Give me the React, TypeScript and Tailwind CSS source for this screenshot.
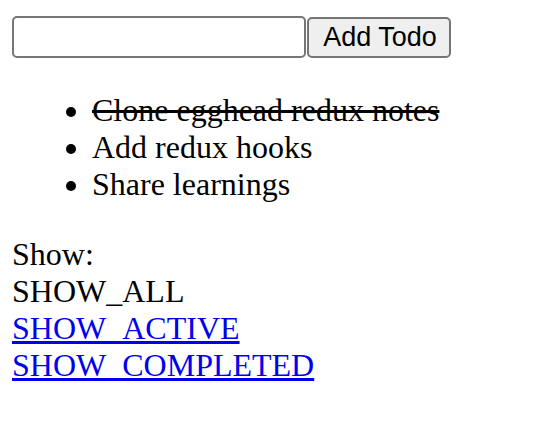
import { FormEvent, useState } from "react"

type Todo = { id: number; text: string; completed: boolean }
type Filter = "SHOW_ALL" | "SHOW_ACTIVE" | "SHOW_COMPLETED"

const filtros: Filter[] = ["SHOW_ALL", "SHOW_ACTIVE", "SHOW_COMPLETED"]

const App = () => {
  const [ texto, setTexto ] = useState<string>("")
  const [ filtro, setFiltro ] = useState<Filter>("SHOW_ALL")
  const [ todos, setTodos ] = useState<Todo[]>([
    { id: 0, text: "Clone egghead redux notes", completed: true },
    { id: 1, text: "Add redux hooks", completed: false },
    { id: 2, text: "Share learnings", completed: false },
  ])

  const adicionar = (e: FormEvent<HTMLFormElement>) => {
    e.preventDefault()
    if (texto.trim().length < 1) return
    setTodos([...todos, { id: todos.length, text: texto, completed: false }])
    setTexto("")
  }

  const alternar = (id: number) => {
    setTodos(todos.map((t) => (t.id === id ? { ...t, completed: !t.completed } : t)))
  }

  const visiveis = todos.filter((t) =>
    filtro === "SHOW_ALL" ? true : filtro === "SHOW_ACTIVE" ? !t.completed : t.completed
  )

  return (
    <main className="min-h-screen bg-white p-[12px] text-[32px] leading-[1.15] text-black font-['Liberation_Serif',serif]">
      <div className="pt-[4px]">
        <form onSubmit={adicionar} className="flex items-start">
          <input
            value={texto}
            onChange={(e) => setTexto(e.target.value)}
            className="h-[42px] w-[294px] rounded-[5px] border-2 border-[#767676] bg-white px-1 text-[26px] outline-none font-['Liberation_Sans',sans-serif]"
          />
          <button
            type="submit"
            className="ml-[1px] mt-[1px] h-[41px] w-[144px] rounded-[5px] border-2 border-[#767676] bg-[#efefef] pl-[2px] text-[27px] leading-none font-['Liberation_Sans',sans-serif]"
          >
            Add Todo
          </button>
        </form>
        <ul className="mt-[34px] mb-[34px] list-disc pl-[80px]">
          {visiveis.map((t) => (
            <li key={t.id} onClick={() => alternar(t.id)} className={t.completed ? "line-through" : ""}>
              {t.text}
            </li>
          ))}
        </ul>
        <div className="flex flex-col items-start">
          <span>Show:</span>
          {filtros.map((f) =>
            f === filtro ? (
              <span key={f}>{f}</span>
            ) : (
              <a
                key={f}
                href="#"
                onClick={(e) => { e.preventDefault(); setFiltro(f) }}
                className="text-[#0000ee] underline"
              >
                {f}
              </a>
            )
          )}
        </div>
      </div>
    </main>
  )
}

export default App
